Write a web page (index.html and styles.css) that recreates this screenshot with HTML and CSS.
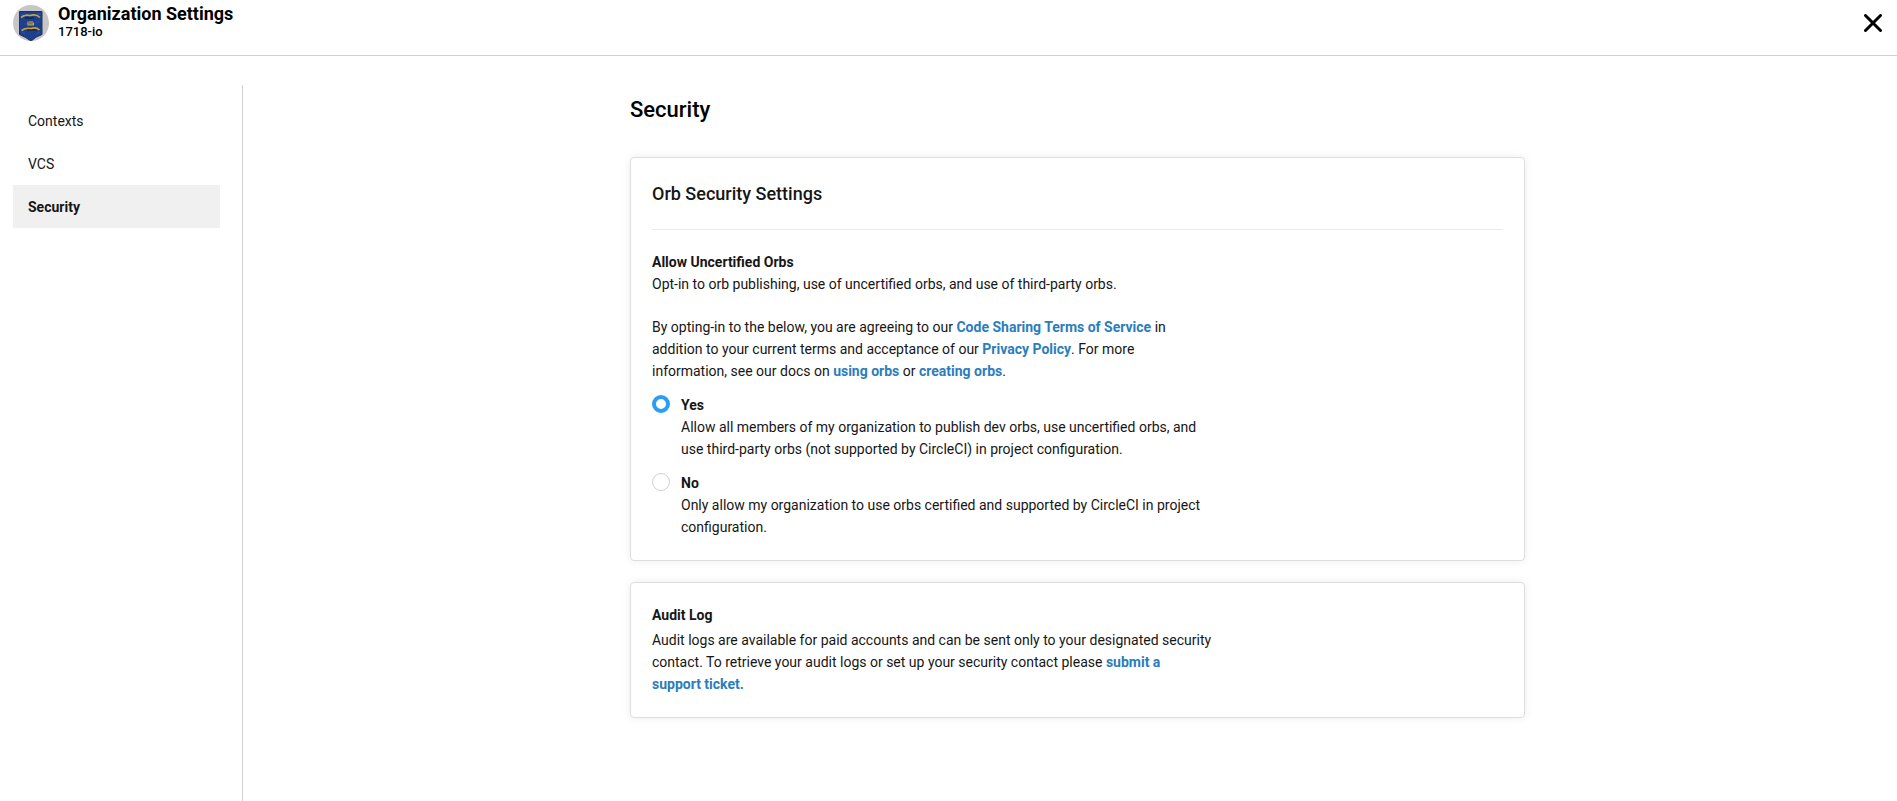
FILE: index.html
```html
<!DOCTYPE html>
<html lang="en">
<head>
<meta charset="utf-8">
<title>Organization Settings</title>
<link rel="stylesheet" href="styles.css">
</head>
<body>
<header class="topbar">
  <svg class="avatar" viewBox="0 0 36 36" aria-hidden="true">
    <circle cx="18" cy="18" r="18" fill="#c6c6c6"/>
    <path d="M6.500 6.500H29V29.500Q23 31.500 18 36Q12.500 32 6.500 29.500Z" fill="#1c3f90" stroke="#2a3348"/>
    <path d="M8 10h3M24 9h4M9 27l3 2M23 29l4-2M12 19h2M23 17h3" stroke="#2c55ad" stroke-width="1"/>
    <path d="M8 12.500Q12 9 17 10.500Q23 8.500 27 12.500" fill="none" stroke="#c9a233" stroke-width="1.700"/>
    <path d="M12 13h9M14 25h10" stroke="#1b2545" stroke-width="1.500"/>
    <path d="M8.500 25.500Q13 22.500 18 23.500Q23 21.500 26.500 25" fill="none" stroke="#c9a233" stroke-width="1.700"/>
    <path d="M15 16.500v3.500h5.500v-2.500M17 16v4M19 16v4" fill="none" stroke="#c9a233" stroke-width="1.200"/>
  </svg>
  <div class="org">
    <h1 class="org-title">Organization Settings</h1>
    <p class="org-name">1718-io</p>
  </div>
  <button class="close" type="button" aria-label="Close">
    <svg class="close-icon" viewBox="0 0 18 18" aria-hidden="true"><path d="M1.500 1.500L16.500 16.500M16.500 1.500L1.500 16.500" stroke="#000" stroke-width="3" stroke-linecap="round"/></svg>
  </button>
</header>
<div class="layout">
  <nav class="sidebar" aria-label="Settings">
    <a class="nav-item" href="#contexts">Contexts</a>
    <a class="nav-item" href="#vcs">VCS</a>
    <a class="nav-item nav-item-active" href="#security" aria-current="page">Security</a>
  </nav>
  <main class="main">
    <div class="content">
      <h2 class="page-title">Security</h2>
      <section class="card">
        <h3 class="card-title">Orb Security Settings</h3>
        <div class="copy">
          <h4 class="label">Allow Uncertified Orbs</h4>
          <p>Opt-in to orb publishing, use of uncertified orbs, and use of third-party orbs.</p>
          <p class="terms">By opting-in to the below, you are agreeing to our <a class="link" href="#terms">Code Sharing Terms of Service</a> in addition to your current terms and acceptance of our <a class="link" href="#privacy">Privacy Policy</a>. For more information, see our docs on <a class="link" href="#using">using orbs</a> or <a class="link" href="#creating">creating orbs</a>.</p>
          <div class="option">
            <input class="radio" type="radio" name="orbs" id="orbs-yes" checked>
            <label class="option-text" for="orbs-yes"><strong class="label">Yes</strong><span>Allow all members of my organization to publish dev orbs, use uncertified orbs, and use third-party orbs (not supported by CircleCI) in project configuration.</span></label>
          </div>
          <div class="option">
            <input class="radio" type="radio" name="orbs" id="orbs-no">
            <label class="option-text" for="orbs-no"><strong class="label">No</strong><span>Only allow my organization to use orbs certified and supported by CircleCI in project configuration.</span></label>
          </div>
        </div>
      </section>
      <section class="card">
        <div class="copy">
          <h4 class="label audit-title">Audit Log</h4>
          <p>Audit logs are available for paid accounts and can be sent only to your designated security contact. To retrieve your audit logs or set up your security contact please <a class="link" href="#ticket">submit a support&nbsp;ticket.</a></p>
        </div>
      </section>
    </div>
  </main>
</div>
</body>
</html>
```

FILE: styles.css
```css
* { box-sizing: border-box; margin: 0; }
body {
  min-height: 100vh;
  display: flex;
  flex-direction: column;
  background: #fff;
  color: #161616;
  font: 14px/22px Roboto, sans-serif;
}
.topbar {
  display: flex;
  align-items: flex-start;
  gap: 9px;
  height: 56px;
  padding: 5px 13px;
  border-bottom: 1px solid #d0d0d0;
  color: #000;
}
.avatar { width: 36px; height: 36px; }
.org { flex: 1; }
.org-title { font-size: 18px; line-height: 18px; font-weight: 700; }
.org-name { font-size: 13px; line-height: 18px; font-weight: 500; }
.close { display: flex; padding: 9px 2px; border: 0; background: none; cursor: pointer; }
.close-icon { width: 18px; height: 18px; }
.layout { flex: 1; display: flex; padding-top: 29px; }
.sidebar { flex: 0 0 243px; padding: 14px 22px 0 13px; border-right: 1px solid #d0d0d0; }
.nav-item { display: block; padding: 11px 15px 10px; color: inherit; text-decoration: none; }
.nav-item-active { background: #f0f0f0; font-weight: 700; }
.main { flex: 1; padding: 11px 0 22px 15px; }
.content { width: 100%; max-width: 895px; margin: 0 auto; }
.page-title { margin-bottom: 34px; font-size: 22px; line-height: 27px; font-weight: 500; color: #000; }
.card {
  margin-bottom: 21px;
  padding: 22px 21px;
  border: 1px solid #dedede;
  border-radius: 4px;
  background: #fff;
  box-shadow: 0 0 9px rgba(0, 0, 0, 0.08);
}
.card-title { margin-bottom: 22px; padding-bottom: 22px; border-bottom: 1px solid #eaeaea; font-size: 18px; line-height: 27px; font-weight: 500; }
.copy { max-width: 576px; }
.label { display: block; font-size: 14px; line-height: 21px; font-weight: 700; }
.terms { max-width: 540px; margin-top: 21px; }
.link { color: #2b7dbc; font-weight: 700; text-decoration: none; }
.option { display: flex; align-items: flex-start; gap: 11px; margin-top: 13px; }
.radio { appearance: none; flex: none; width: 18px; height: 18px; margin: 0; border: 1px solid #d0d0d0; border-radius: 50%; background: #fff; }
.radio:checked { border: 4px solid #2a9df4; }
.option-text { max-width: 530px; }
.audit-title { margin-bottom: 3px; }
```
